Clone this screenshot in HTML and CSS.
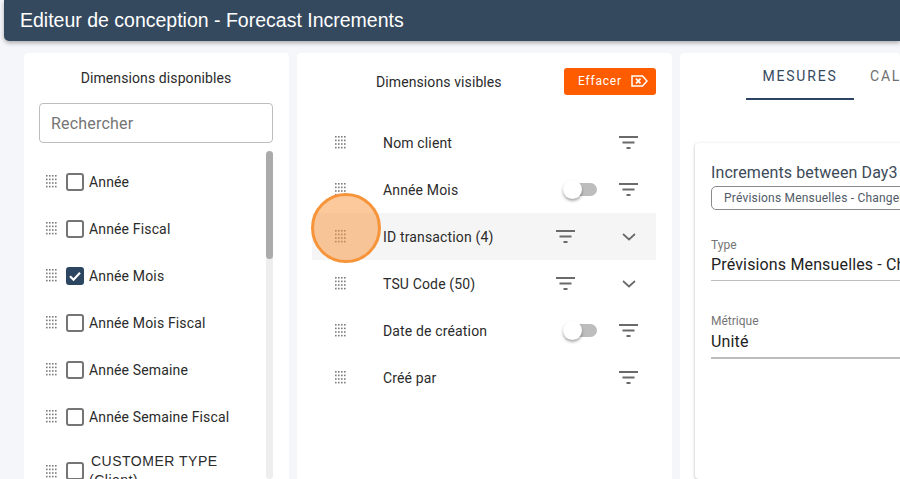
FILE: index.html
```html
<!DOCTYPE html>
<html lang="fr">
<head>
    <meta charset="utf-8">
    <title>Editeur de conception</title>
    <link rel="stylesheet" href="styles.css">
</head>
<body>

<svg class="sprites" width="0" height="0">
    <symbol id="grip" viewBox="0 0 11 13">
        <g fill="currentColor">
            <rect x="0" y="0" width="1.6" height="1.6"/><rect x="3" y="0" width="1.6" height="1.6"/><rect x="6" y="0" width="1.6" height="1.6"/><rect x="9" y="0" width="1.6" height="1.6"/>
            <rect x="0" y="3.6" width="1.6" height="1.6"/><rect x="3" y="3.6" width="1.6" height="1.6"/><rect x="6" y="3.6" width="1.6" height="1.6"/><rect x="9" y="3.6" width="1.6" height="1.6"/>
            <rect x="0" y="7.2" width="1.6" height="1.6"/><rect x="3" y="7.2" width="1.6" height="1.6"/><rect x="6" y="7.2" width="1.6" height="1.6"/><rect x="9" y="7.2" width="1.6" height="1.6"/>
            <rect x="0" y="10.8" width="1.6" height="1.6"/><rect x="3" y="10.8" width="1.6" height="1.6"/><rect x="6" y="10.8" width="1.6" height="1.6"/><rect x="9" y="10.8" width="1.6" height="1.6"/>
        </g>
    </symbol>
    <symbol id="filter" viewBox="0 0 19 13">
        <path d="M0 0h19v2H0zM3.500 5.500h12v2h-12zM7.500 11h4v2h-4z" fill="currentColor"/>
    </symbol>
    <symbol id="chevron" viewBox="0 0 14 8">
        <path d="M1 1l6 5.500L13 1" fill="none" stroke="currentColor" stroke-width="1.700"/>
    </symbol>
</svg>

<header class="topbar">Editeur de conception - Forecast Increments</header>

<main class="columns">
    <section class="panel panel-available">
        <h2 class="panel-title">Dimensions disponibles</h2>
        <input class="search" type="text" placeholder="Rechercher">
        <div class="list-wrap">
            <ul class="check-list">
                <li class="check-row"><svg class="grip"><use href="#grip"/></svg><span class="box"></span><span>Année</span></li>
                <li class="check-row"><svg class="grip"><use href="#grip"/></svg><span class="box"></span><span>Année Fiscal</span></li>
                <li class="check-row"><svg class="grip"><use href="#grip"/></svg><span class="box box-on"><svg viewBox="0 0 18 18"><path d="M4 9.200l3.500 3.500L14 5.800" fill="none" stroke="#fff" stroke-width="2.200"/></svg></span><span>Année Mois</span></li>
                <li class="check-row"><svg class="grip"><use href="#grip"/></svg><span class="box"></span><span>Année Mois Fiscal</span></li>
                <li class="check-row"><svg class="grip"><use href="#grip"/></svg><span class="box"></span><span>Année Semaine</span></li>
                <li class="check-row"><svg class="grip"><use href="#grip"/></svg><span class="box"></span><span>Année Semaine Fiscal</span></li>
                <li class="check-row check-row-tall"><svg class="grip"><use href="#grip"/></svg><span class="box"></span><span class="wrap-label"><span class="wrap-first">CUSTOMER TYPE</span> (Client)</span></li>
            </ul>
            <div class="scrollbar"><div class="scroll-thumb"></div></div>
        </div>
    </section>

    <section class="panel panel-visible">
        <div class="visible-head">
            <h2 class="panel-title">Dimensions visibles</h2>
            <button class="btn-clear">Effacer
                <svg width="17" height="12" viewBox="0 0 17 12"><path d="M1 1h10.500L16 6l-4.500 5H1z" fill="none" stroke="#fff" stroke-width="1.500"/><path d="M5 3.600l4.500 4.800M9.500 3.600L5 8.400" stroke="#fff" stroke-width="1.700"/></svg>
            </button>
        </div>
        <ul class="dim-list">
            <li class="dim-row">
                <svg class="grip"><use href="#grip"/></svg><span class="dim-name">Nom client</span>
                <svg class="filter"><use href="#filter"/></svg>
            </li>
            <li class="dim-row">
                <svg class="grip"><use href="#grip"/></svg><span class="dim-name">Année Mois</span>
                <span class="toggle"></span><svg class="filter"><use href="#filter"/></svg>
            </li>
            <li class="dim-row dim-row-active">
                <svg class="grip"><use href="#grip"/></svg><span class="dim-name">ID transaction (4)</span>
                <svg class="filter"><use href="#filter"/></svg><svg class="chevron"><use href="#chevron"/></svg>
            </li>
            <li class="dim-row">
                <svg class="grip"><use href="#grip"/></svg><span class="dim-name">TSU Code (50)</span>
                <svg class="filter"><use href="#filter"/></svg><svg class="chevron"><use href="#chevron"/></svg>
            </li>
            <li class="dim-row">
                <svg class="grip"><use href="#grip"/></svg><span class="dim-name">Date de création</span>
                <span class="toggle"></span><svg class="filter"><use href="#filter"/></svg>
            </li>
            <li class="dim-row">
                <svg class="grip"><use href="#grip"/></svg><span class="dim-name">Créé par</span>
                <svg class="filter"><use href="#filter"/></svg>
            </li>
        </ul>
    </section>

    <section class="panel panel-measures">
        <div class="tabs">
            <span class="tab tab-active">MESURES</span>
            <span class="tab">CALCULS</span>
        </div>
        <div class="card">
            <div class="card-title">Increments between Day3 and Day1</div>
            <div class="chip">Prévisions Mensuelles - Changements</div>
            <div class="field field-type">
                <div class="field-label">Type</div>
                <div class="field-value">Prévisions Mensuelles - Changements</div>
            </div>
            <div class="field field-metric">
                <div class="field-label">Métrique</div>
                <div class="field-value">Unité</div>
            </div>
        </div>
    </section>
</main>

<div class="click-marker"></div>

</body>
</html>
```

FILE: styles.css
```css
* {
    margin: 0;
    padding: 0;
    box-sizing: border-box;
}

html, body {
    height: 100%;
    overflow: hidden;
}

body {
    position: relative;
    background-color: #f5f6fa;
    color: #2b2b2b;
    font-family: Roboto, "Liberation Sans", sans-serif;
    font-size: 14px;
}

ul {
    list-style: none;
}

.sprites {
    position: absolute;
}

.topbar {
    height: 41px;
    margin-left: 4px;
    padding-left: 16px;
    color: #fff;
    background-color: #34495e;
    border-bottom-left-radius: 5px;
    box-shadow: 0 2px 4px rgba(0, 0, 0, 0.3);
    font-family: "Liberation Sans", Arial, sans-serif;
    font-size: 19.5px;
    line-height: 41px;
}

.columns {
    display: grid;
    grid-template-columns: 265px 375px 220px;
    column-gap: 8px;
    height: 426px;
    margin: 12px 0 0 24px;
}

.panel {
    background-color: #fff;
    border-radius: 4px 4px 0 0;
    overflow: hidden;
}

.panel-title {
    font-size: 14px;
    font-weight: 400;
    letter-spacing: 0.1px;
}

.panel-available {
    padding: 17px 16px 0 15px;
}

.panel-available .panel-title {
    line-height: 16px;
    text-align: center;
}

.search {
    display: block;
    width: 234px;
    height: 40px;
    margin-top: 17px;
    padding: 0 11px;
    border: 1px solid #bdbdbd;
    border-radius: 4px;
    font-family: Roboto, sans-serif;
    font-size: 16px;
    letter-spacing: 0.2px;
}

.search::placeholder {
    color: #757575;
    opacity: 1;
}

.list-wrap {
    display: flex;
    justify-content: space-between;
    margin-top: 8px;
}

.check-list {
    padding-top: 7px;
}

.check-row {
    display: flex;
    align-items: center;
    height: 47px;
    letter-spacing: 0.15px;
}

.check-row-tall {
    height: 62px;
}

.grip {
    flex: none;
    width: 11px;
    height: 13px;
    color: #7d7d7d;
}

.check-row .grip {
    margin: 0 9px 0 7px;
}

.box {
    flex: none;
    width: 18px;
    height: 18px;
    margin-right: 5px;
    border: 2px solid #757575;
    border-radius: 3px;
}

.box svg {
    display: block;
    width: 18px;
    height: 18px;
    margin: -2px;
}

.box-on {
    background-color: #2c4661;
    border-color: #2c4661;
}

.wrap-label {
    width: 140px;
    font-family: "Liberation Sans", Arial, sans-serif;
    letter-spacing: 0.5px;
    line-height: 19px;
}

.wrap-first {
    display: block;
    margin-left: 2px;
}

.scrollbar {
    width: 7px;
    height: 328px;
    background-color: #eeeeee;
    border-radius: 4px;
}

.scroll-thumb {
    height: 108px;
    background-color: #ababab;
    border-radius: 4px;
}

.panel-visible {
    padding: 0 16px 0 15px;
}

.visible-head {
    display: flex;
    justify-content: space-between;
    align-items: center;
    height: 57px;
    padding: 0 0 0 64px;
}

.btn-clear {
    display: flex;
    align-items: center;
    gap: 9px;
    width: 92px;
    height: 27px;
    margin-top: -1px;
    padding-left: 14px;
    color: #fff;
    background-color: #ff5c00;
    border: none;
    border-radius: 3px;
    font-family: Roboto, sans-serif;
    font-size: 12px;
    letter-spacing: 0.8px;
}

.dim-list {
    width: 344px;
    margin-top: 9px;
}

.dim-row {
    display: flex;
    align-items: center;
    height: 47px;
    padding: 0 18px 0 23px;
    letter-spacing: 0.15px;
}

.dim-name {
    flex: 1;
    margin-left: 37px;
}

.dim-row-active {
    background-color: #f5f5f5;
}

.filter {
    flex: none;
    width: 19px;
    height: 13px;
    color: #6a6a6a;
}

.chevron {
    flex: none;
    width: 14px;
    height: 8px;
    margin-left: 47px;
    margin-right: 2px;
    color: #6a6a6a;
}

.toggle {
    position: relative;
    flex: none;
    width: 34px;
    height: 20px;
    margin-right: 22px;
}

.toggle::before {
    content: "";
    position: absolute;
    left: 2px;
    top: 3px;
    width: 32px;
    height: 13px;
    background-color: #bdbdbd;
    border-radius: 7px;
}

.toggle::after {
    content: "";
    position: absolute;
    left: 0;
    top: 0;
    width: 19px;
    height: 19px;
    background-color: #fff;
    border-radius: 50%;
    box-shadow: 0 2px 3px rgba(0, 0, 0, 0.35);
}

.panel-measures {
    padding-left: 15px;
}

.tabs {
    display: flex;
    height: 47px;
    margin-left: 51px;
    white-space: nowrap;
}

.tab {
    flex: none;
    height: 47px;
    padding: 0 16px;
    color: #6f6f6f;
    font-size: 14px;
    letter-spacing: 1.8px;
    line-height: 46px;
    text-align: center;
}

.tab-active {
    width: 108px;
    color: #34495e;
    border-bottom: 2px solid #2c4661;
}

.card {
    width: 300px;
    height: 336px;
    margin-top: 43px;
    padding: 21px 0 0 16px;
    background-color: #fff;
    border-radius: 4px;
    box-shadow: 0 1px 3px rgba(0, 0, 0, 0.3);
    white-space: nowrap;
}

.card-title {
    color: #3c4a58;
    font-size: 16px;
    letter-spacing: 0.1px;
    line-height: 18px;
}

.chip {
    width: 270px;
    height: 24px;
    margin-top: 4px;
    padding-left: 12px;
    color: #4f5a66;
    border: 1px solid #8a8a8a;
    border-radius: 5px;
    font-size: 12px;
    line-height: 22px;
    letter-spacing: 0.2px;
}

.field {
    width: 270px;
    border-bottom: 1px solid #bdbdbd;
}

.field-type {
    margin-top: 28px;
    height: 43px;
}

.field-type .field-value {
    margin-top: 3px;
}

.field-metric {
    margin-top: 33px;
    height: 45px;
    border-bottom-width: 2px;
}

.field-label {
    color: #757575;
    font-size: 12px;
    line-height: 14px;
}

.field-value {
    margin-top: 4px;
    color: #222;
    font-size: 16px;
    letter-spacing: 0.15px;
    line-height: 20px;
}

.click-marker {
    position: absolute;
    left: 311px;
    top: 193px;
    width: 70px;
    height: 70px;
    background-color: rgba(247, 148, 58, 0.5);
    border: 3px solid #f7943a;
    border-radius: 50%;
}
```
